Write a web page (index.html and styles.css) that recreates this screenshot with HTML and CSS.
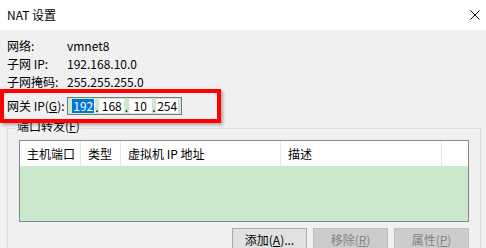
FILE: index.html
```html
<!DOCTYPE html>
<html lang="zh-CN">
<head>
<meta charset="utf-8">
<title>NAT 设置</title>
<link rel="stylesheet" href="styles.css">
</head>
<body>
<div class="window">
  <div class="titlebar">
    <span class="title">NAT 设置</span>
    <svg class="close" width="10" height="10" viewBox="0 0 10 10" aria-hidden="true">
      <path d="M0.5 0.5 L9.5 9.5 M9.5 0.5 L0.5 9.5" stroke="#000" stroke-width="1" fill="none"/>
    </svg>
  </div>
  <div class="content">
    <div class="row"><span class="lbl">网络:</span><span class="val">vmnet8</span></div>
    <div class="row"><span class="lbl">子网 IP:</span><span class="val">192.168.10.0</span></div>
    <div class="row"><span class="lbl">子网掩码:</span><span class="val">255.255.255.0</span></div>
    <div class="row gw">
      <span class="lbl">网关 IP(<u>G</u>):</span>
      <div class="ipbox">
        <span class="seg s1"><span class="sel">192</span></span><span class="dot">.</span><span class="seg s2">168</span><span class="dot">.</span><span class="seg s3">10</span><span class="dot">.</span><span class="seg s4">254</span>
      </div>
    </div>
    <div class="group">
      <div class="group-label">端口转发(<u>F</u>)</div>
      <div class="list">
        <div class="list-head">
          <div class="col c1">主机端口</div>
          <div class="col c2">类型</div>
          <div class="col c3">虚拟机 IP 地址</div>
          <div class="col c4">描述</div>
          <div class="col c5"></div>
        </div>
        <div class="list-body"></div>
      </div>
      <div class="buttons">
        <button class="btn">添加(<u>A</u>)...</button>
        <button class="btn" disabled>移除(<u>R</u>)</button>
        <button class="btn" disabled>属性(<u>P</u>)</button>
      </div>
    </div>
  </div>
  <div class="highlight"></div>
</div>
</body>
</html>
```

FILE: styles.css
```css
* { box-sizing: border-box; }
html, body { margin: 0; padding: 0; }
body {
  width: 486px;
  height: 248px;
  overflow: hidden;
  background: #f0f0f0;
  font-family: "Noto Sans CJK SC", "Liberation Sans", sans-serif;
  font-size: 12px;
  color: #000;
}
.window {
  position: relative;
  width: 486px;
  height: 248px;
  overflow: hidden;
}
.titlebar {
  height: 30px;
  background: #fff;
  display: flex;
  align-items: center;
  justify-content: space-between;
  padding: 0 6px 0 7px;
}
.title { line-height: 16px; }
.close { display: block; }
.content {
  padding: 7px 5px 0 7px;
}
.row {
  display: flex;
  align-items: center;
  height: 18px;
  line-height: 18px;
}
.lbl { width: 60px; flex: none; }
.row.gw {
  margin-top: 5px;
  height: 19px;
}
u { text-decoration: underline; text-underline-offset: 1px; }
.ipbox {
  display: flex;
  align-items: stretch;
  height: 18px;
  width: 115px;
  border: 1px solid #7a7a7a;
  background: #cce8cf;
  padding: 1px 3px 1px 4px;
  line-height: 16px;
}
.seg {
  background: #fff;
  display: flex;
  align-items: center;
  justify-content: center;
}
.s1 { width: 23px; }
.s2 { width: 25px; }
.s3 { width: 23px; }
.s4 { width: 22px; }
.dot {
  width: 5px;
  text-align: center;
  line-height: 16px;
}
.sel {
  background: #0078d7;
  color: #fff;
  padding: 0 1px;
  line-height: 14px;
}
.group {
  margin-top: 13px;
  border: 1px solid #dcdcdc;
  border-bottom: none;
  height: 140px;
  padding: 0 11px 0 11px;
}
.group-label {
  display: block;
  width: fit-content;
  margin-top: -12px;
  margin-left: -3px;
  padding: 0 1px;
  background: #f0f0f0;
  line-height: 18px;
  height: 18px;
}
.list {
  margin-top: 5px;
  height: 82px;
  border: 1px solid #828790;
  background: #cce8cc;
  display: flex;
  flex-direction: column;
}
.list-head {
  display: flex;
  height: 25px;
  background: #fff;
  flex: none;
}
.col {
  border-right: 1px solid #e5e5e5;
  padding-left: 7px;
  line-height: 25px;
  white-space: nowrap;
}
.c1 { width: 61px; }
.c2 { width: 40px; }
.c3 { width: 160px; }
.c4 { width: 161px; }
.c5 { flex: 1; border-right: none; }
.list-body { flex: 1; }
.buttons {
  display: flex;
  justify-content: flex-end;
  gap: 6px;
  margin-top: 6px;
}
.btn {
  width: 75px;
  height: 23px;
  border: 1px solid #adadad;
  background: #e1e1e1;
  font-family: inherit;
  font-size: 12px;
  color: #000;
  padding: 0;
  line-height: 21px;
}
.btn:disabled {
  background: #cccccc;
  border-color: #bfbfbf;
  color: #838383;
}
.highlight {
  position: absolute;
  left: 0;
  top: 89px;
  width: 221px;
  height: 34px;
  border: 4px solid #ff0000;
  box-shadow: 2px 2px 3px rgba(0, 0, 0, 0.3);
}
```
